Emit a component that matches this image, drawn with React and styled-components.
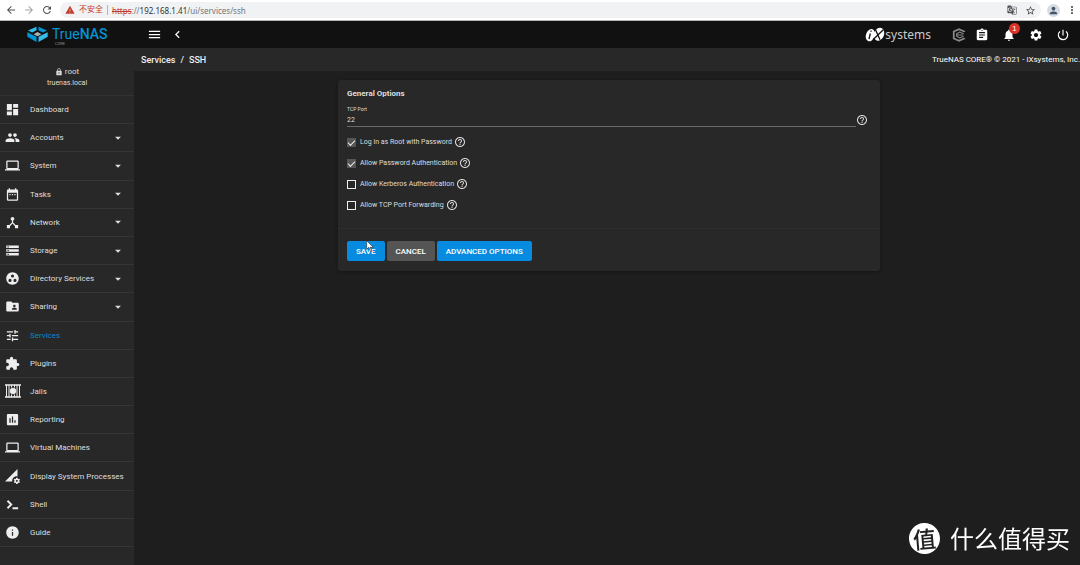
import React from 'react'
import styled, { createGlobalStyle } from 'styled-components'
import {
	MdArrowBack, MdArrowForward, MdRefresh, MdWarning, MdGTranslate, MdStarBorder, MdPerson, MdMoreVert,
	MdMenu, MdChevronLeft, MdAssignment, MdNotifications, MdSettings, MdPowerSettingsNew, MdLock,
	MdDashboard, MdPeople, MdLaptop, MdDateRange, MdDeviceHub, MdStorage, MdGroupWork, MdFolderShared,
	MdTune, MdExtension, MdPoll, MdPermDataSetting, MdInfo, MdArrowDropDown, MdHelpOutline,
} from 'react-icons/md'

const JailIcon = () => (
	<svg viewBox="0 0 32 28" width="16" height="14" fill="none" stroke="currentColor">
		<path d="M0 2h32M0 26h32" strokeWidth="3" />
		<path d="M3 2v24M29 2v24M8 2v24M24 2v24" strokeWidth="2" />
		<path d="M13 2v5M19 2v5M13 21v5M19 21v5" strokeWidth="2" />
		<circle cx="16" cy="14" r="6" fill="currentColor" />
	</svg>
)

const ShellIcon = () => (
	<svg viewBox="0 0 24 24" width="15" height="15" fill="none" stroke="currentColor" strokeWidth="3">
		<path d="M4 6l6 6-6 6M12 18h9" />
	</svg>
)

const NasLogo = () => (
	<svg viewBox="0 0 64 50" width="21" height="17">
		<path d="M29 1v11l-13 7-13-6z" fill="#31beec" />
		<path d="M35 1v11l13 7 13-6z" fill="#0095d5" />
		<path d="M1 18l28 14v16L1 32z" fill="#0095d5" />
		<path d="M63 18L35 32v16l28-16z" fill="#31beec" />
		<path d="M32 17l12 7-12 6-12-6z" fill="#aeb2b5" />
	</svg>
)

const IxLogo = () => (
	<svg viewBox="0 0 60 44" width="20" height="15">
		<ellipse cx="16" cy="24" rx="13" ry="19" fill="#fff" transform="rotate(20 16 24)" />
		<ellipse cx="42" cy="21" rx="15" ry="20" fill="#fff" transform="rotate(20 42 21)" />
		<path d="M16 19l-4 17M18 10v4M31 6l14 32M55 8L24 38" stroke="#111" strokeWidth="4" fill="none" />
	</svg>
)

const CoreIcon = () => (
	<svg viewBox="0 0 24 24" width="14" height="14" fill="none" stroke="#8a8a8a" strokeWidth="3">
		<path d="M21 7V6l-9-4-9 4v12l9 4 9-4v-1" />
		<path d="M20 10l-7-3-5 3v4l5 3 7-3M9 12h10" strokeWidth="2" />
	</svg>
)

const Cursor = () => (
	<CursorSvg viewBox="0 0 12 18" width="8" height="12">
		<path d="M1 1v13l3-3 3 6 2-1-3-5h5z" fill="#fff" stroke="#333" />
	</CursorSvg>
)

const menu = [
	{ name: 'Dashboard', icon: MdDashboard },
	{ name: 'Accounts', icon: MdPeople, sub: true },
	{ name: 'System', icon: MdLaptop, sub: true },
	{ name: 'Tasks', icon: MdDateRange, sub: true },
	{ name: 'Network', icon: MdDeviceHub, sub: true },
	{ name: 'Storage', icon: MdStorage, sub: true },
	{ name: 'Directory Services', icon: MdGroupWork, sub: true },
	{ name: 'Sharing', icon: MdFolderShared, sub: true },
	{ name: 'Services', icon: MdTune, active: true },
	{ name: 'Plugins', icon: MdExtension },
	{ name: 'Jails', icon: JailIcon },
	{ name: 'Reporting', icon: MdPoll },
	{ name: 'Virtual Machines', icon: MdLaptop },
	{ name: 'Display System Processes', icon: MdPermDataSetting },
	{ name: 'Shell', icon: ShellIcon },
	{ name: 'Guide', icon: MdInfo },
]

const options = [
	{ id: 'rootlogin', label: 'Log in as Root with Password', checked: true },
	{ id: 'passwordauth', label: 'Allow Password Authentication', checked: true },
	{ id: 'kerberos', label: 'Allow Kerberos Authentication', checked: false },
	{ id: 'tcpfwd', label: 'Allow TCP Port Forwarding', checked: false },
]

const App = () => {
	return (
		<Page>
			<Global />
			<Browser>
				<IconButton aria-label="Back"><MdArrowBack size={12} /></IconButton>
				<IconButton aria-label="Forward" $color="#a5a5a5"><MdArrowForward size={12} /></IconButton>
				<IconButton aria-label="Reload"><MdRefresh size={12} /></IconButton>
				<Address>
					<MdWarning size={10} color="#c5392b" />
					<Unsafe>不安全</Unsafe>
					<Url><s>https</s>://<b>192.168.1.41</b>/ui/services/ssh</Url>
					<MdGTranslate size={10} />
					<MdStarBorder size={11} />
				</Address>
				<Avatar><MdPerson size={11} /></Avatar>
				<IconButton aria-label="More"><MdMoreVert size={12} /></IconButton>
			</Browser>
			<Topbar>
				<Brand href="#">
					<NasLogo />
					<BrandText>
						<BrandName>True<b>NAS</b></BrandName>
						<Edition>CORE</Edition>
					</BrandText>
				</Brand>
				<TopLeft>
					<IconButton aria-label="Menu" $color="#fff"><MdMenu size={15} /></IconButton>
					<IconButton aria-label="Collapse" $color="#fff"><MdChevronLeft size={15} /></IconButton>
				</TopLeft>
				<TopRight>
					<Ix><IxLogo />systems</Ix>
					<Jobs>
						<IconButton aria-label="TrueCommand"><CoreIcon /></IconButton>
						<IconButton aria-label="Tasks" $color="#fff"><MdAssignment size={14} /></IconButton>
					</Jobs>
					<IconButton aria-label="Alerts" $color="#fff">
						<MdNotifications size={14} />
						<Badge>1</Badge>
					</IconButton>
					<IconButton aria-label="Settings" $color="#fff"><MdSettings size={14} /></IconButton>
					<IconButton aria-label="Power" $color="#fff"><MdPowerSettingsNew size={14} /></IconButton>
				</TopRight>
			</Topbar>
			<Body>
				<Side>
					<User>
						<UserName><MdLock size={8} />root</UserName>
						<Host>truenas.local</Host>
					</User>
					<Nav>
						{menu.map(({ name, icon: Icon, sub, active }) => (
							<Item key={name} href="#" $active={active}>
								<ItemIcon><Icon size={15} /></ItemIcon>
								<span>{name}</span>
								{sub && <MdArrowDropDown size={14} />}
							</Item>
						))}
					</Nav>
				</Side>
				<Main>
					<Crumbs>
						<Trail>
							<a href="#">Services</a>
							<span>/</span>
							<span>SSH</span>
						</Trail>
						<Copyright>TrueNAS CORE® © 2021 - iXsystems, Inc.</Copyright>
					</Crumbs>
					<Card>
						<Title>General Options</Title>
						<PortRow>
							<Field>
								<label htmlFor="port">TCP Port</label>
								<input id="port" defaultValue="22" />
							</Field>
							<MdHelpOutline size={12} />
						</PortRow>
						<Options>
							{options.map(({ id, label, checked }) => (
								<Option key={id}>
									<Check id={id} type="checkbox" defaultChecked={checked} />
									<label htmlFor={id}>{label}</label>
									<MdHelpOutline size={12} />
								</Option>
							))}
						</Options>
						<Actions>
							<Button type="button" $primary>SAVE<Cursor /></Button>
							<Button type="button">CANCEL</Button>
							<Button type="button" $primary>ADVANCED OPTIONS</Button>
						</Actions>
					</Card>
				</Main>
			</Body>
			<Watermark>
				<Seal>值</Seal>
				什么值得买
			</Watermark>
		</Page>
	)
}

const Global = createGlobalStyle`
*{
	box-sizing:border-box;
}
body{
	margin:0;
	background:#1e1e1e;
	font-family:Roboto,"Noto Sans CJK SC",sans-serif;
}
a{
	color:inherit;
	text-decoration:none;
}
svg{
	flex-shrink:0;
}
`
const Page = styled.div`
min-height:100vh;
display:flex;
flex-direction:column;
color:#dedede;
font-size:8px;
`
const Browser = styled.header`
height:21px;
display:flex;
align-items:center;
gap:6px;
padding:0 2px 0 5px;
background:#fff;
color:#4c5054;
border-bottom:1px solid #b5b5b5;
`
const IconButton = styled.button`
position:relative;
display:flex;
padding:0;
border:none;
background:none;
color:${({ $color }) => $color || '#4c5054'};
`
const Address = styled.div`
flex:1;
height:16px;
display:flex;
align-items:center;
gap:4px;
padding:0 5px;
margin-left:1px;
border-radius:8px;
background:#f0f2f3;
& svg:last-child{
	margin-left:4px;
}
`
const Unsafe = styled.span`
color:#c5392b;
padding-right:4px;
border-right:1px solid #b5b5b5;
line-height:10px;
`
const Url = styled.span`
flex:1;
font-family:"Noto Sans",sans-serif;
font-size:8px;
color:#73777a;
& s{
	color:#c5392b;
}
& b{
	font-weight:400;
	color:#303336;
}
`
const Avatar = styled.span`
display:flex;
padding:1px;
border-radius:50%;
background:#d5dce3;
color:#455468;
`
const Topbar = styled.header`
height:27px;
display:flex;
align-items:center;
background:#111;
`
const Brand = styled.a`
width:134px;
display:flex;
align-items:center;
gap:4px;
padding-left:27px;
`
const BrandText = styled.div`
display:flex;
flex-direction:column;
padding-top:3px;
`
const BrandName = styled.span`
font-size:14px;
line-height:15px;
color:#0095d5;
& b{
	font-weight:500;
}
`
const Edition = styled.span`
padding-left:3px;
font-size:4px;
line-height:4px;
color:#8a8a8a;
`
const TopLeft = styled.div`
display:flex;
align-items:center;
gap:8px;
padding-left:13px;
`
const TopRight = styled.div`
display:flex;
align-items:center;
gap:13px;
margin-left:auto;
padding-right:10px;
`
const Jobs = styled.div`
display:flex;
gap:9px;
`
const Ix = styled.span`
display:flex;
align-items:center;
margin-right:8px;
font-family:"Noto Sans",sans-serif;
font-size:12px;
line-height:16px;
color:#c9c9c9;
`
const Badge = styled.span`
position:absolute;
top:-5px;
right:-4px;
width:11px;
height:11px;
border-radius:50%;
background:#dc3226;
color:#fff;
font-size:8px;
line-height:11px;
text-align:center;
`
const Body = styled.div`
flex:1;
display:flex;
`
const Side = styled.aside`
width:134px;
display:flex;
flex-direction:column;
padding-bottom:18px;
background:#282828;
`
const User = styled.div`
height:48px;
display:flex;
flex-direction:column;
align-items:center;
justify-content:flex-end;
padding-bottom:7px;
border-bottom:1px solid #323232;
`
const UserName = styled.span`
display:flex;
align-items:center;
gap:2px;
font-size:8px;
line-height:12px;
`
const Host = styled.span`
font-size:7px;
line-height:10px;
`
const Nav = styled.nav`
flex:1;
display:grid;
grid-auto-rows:1fr;
`
const Item = styled.a`
display:flex;
align-items:center;
min-height:28px;
padding:0 9px 0 5px;
border-bottom:1px solid #363636;
color:${({ $active }) => $active ? '#0a86cf' : '#dedede'};
& > svg{
	margin-left:auto;
}
`
const ItemIcon = styled.span`
display:flex;
width:25px;
color:#eee;
`
const Main = styled.main`
flex:1;
`
const Crumbs = styled.div`
height:23px;
display:flex;
align-items:center;
justify-content:space-between;
padding-left:7px;
background:#282828;
`
const Trail = styled.div`
display:flex;
gap:5px;
font-size:9px;
font-weight:500;
color:#eee;
`
const Copyright = styled.span`
font-size:8px;
color:#fff;
`
const Card = styled.form`
margin:9px 200px 0 204px;
border-radius:3px;
background:#282828;
box-shadow:0 1px 3px #151515;
`
const Title = styled.h3`
margin:0;
padding:8px 9px 6px;
font-size:8px;
line-height:11px;
font-weight:700;
`
const PortRow = styled.div`
display:flex;
align-items:flex-end;
padding:0 12px 0 9px;
& > svg{
	margin-bottom:1px;
}
`
const Field = styled.div`
flex:1;
display:flex;
flex-direction:column;
border-bottom:1px solid #686868;
& label{
	font-size:5px;
	line-height:8px;
}
& input{
	height:13px;
	padding:0;
	border:none;
	background:none;
	color:#dedede;
	font-family:inherit;
	font-size:7px;
}
`
const Options = styled.div`
display:flex;
flex-direction:column;
gap:9px;
padding:9px 9px 17px;
border-bottom:1px solid #2e2e2e;
`
const Option = styled.div`
display:flex;
align-items:center;
gap:2px;
height:12px;
font-size:7px;
`
const Check = styled.input`
appearance:none;
width:9px;
height:9px;
margin:0 2px 0 0;
border:1px solid #eee;
&:checked{
	border:none;
	background:#555;
}
&:checked::after{
	content:"";
	display:block;
	width:6px;
	height:3px;
	margin:2px 1px;
	border:solid #eee;
	border-width:0 0 1px 1px;
	transform:rotate(-45deg);
}
`
const Actions = styled.div`
display:flex;
gap:2px;
padding:12px 9px 10px;
`
const Button = styled.button`
position:relative;
height:20px;
padding:0 9px;
border:none;
border-radius:2px;
background:${({ $primary }) => $primary ? '#078be0' : '#555'};
color:#fff;
font-family:inherit;
font-size:8px;
font-weight:500;
`
const CursorSvg = styled.svg`
position:absolute;
top:-1px;
left:19px;
`
const Watermark = styled.div`
position:fixed;
right:10px;
bottom:11px;
display:flex;
align-items:center;
gap:10px;
font-family:"Noto Sans CJK SC",sans-serif;
font-size:24px;
line-height:32px;
color:#fff;
`
const Seal = styled.span`
width:31px;
height:31px;
border-radius:50%;
background:#fff;
color:#222;
text-align:center;
font-size:23px;
line-height:30px;
font-weight:500;
transform:rotate(-5deg);
`
export default App
